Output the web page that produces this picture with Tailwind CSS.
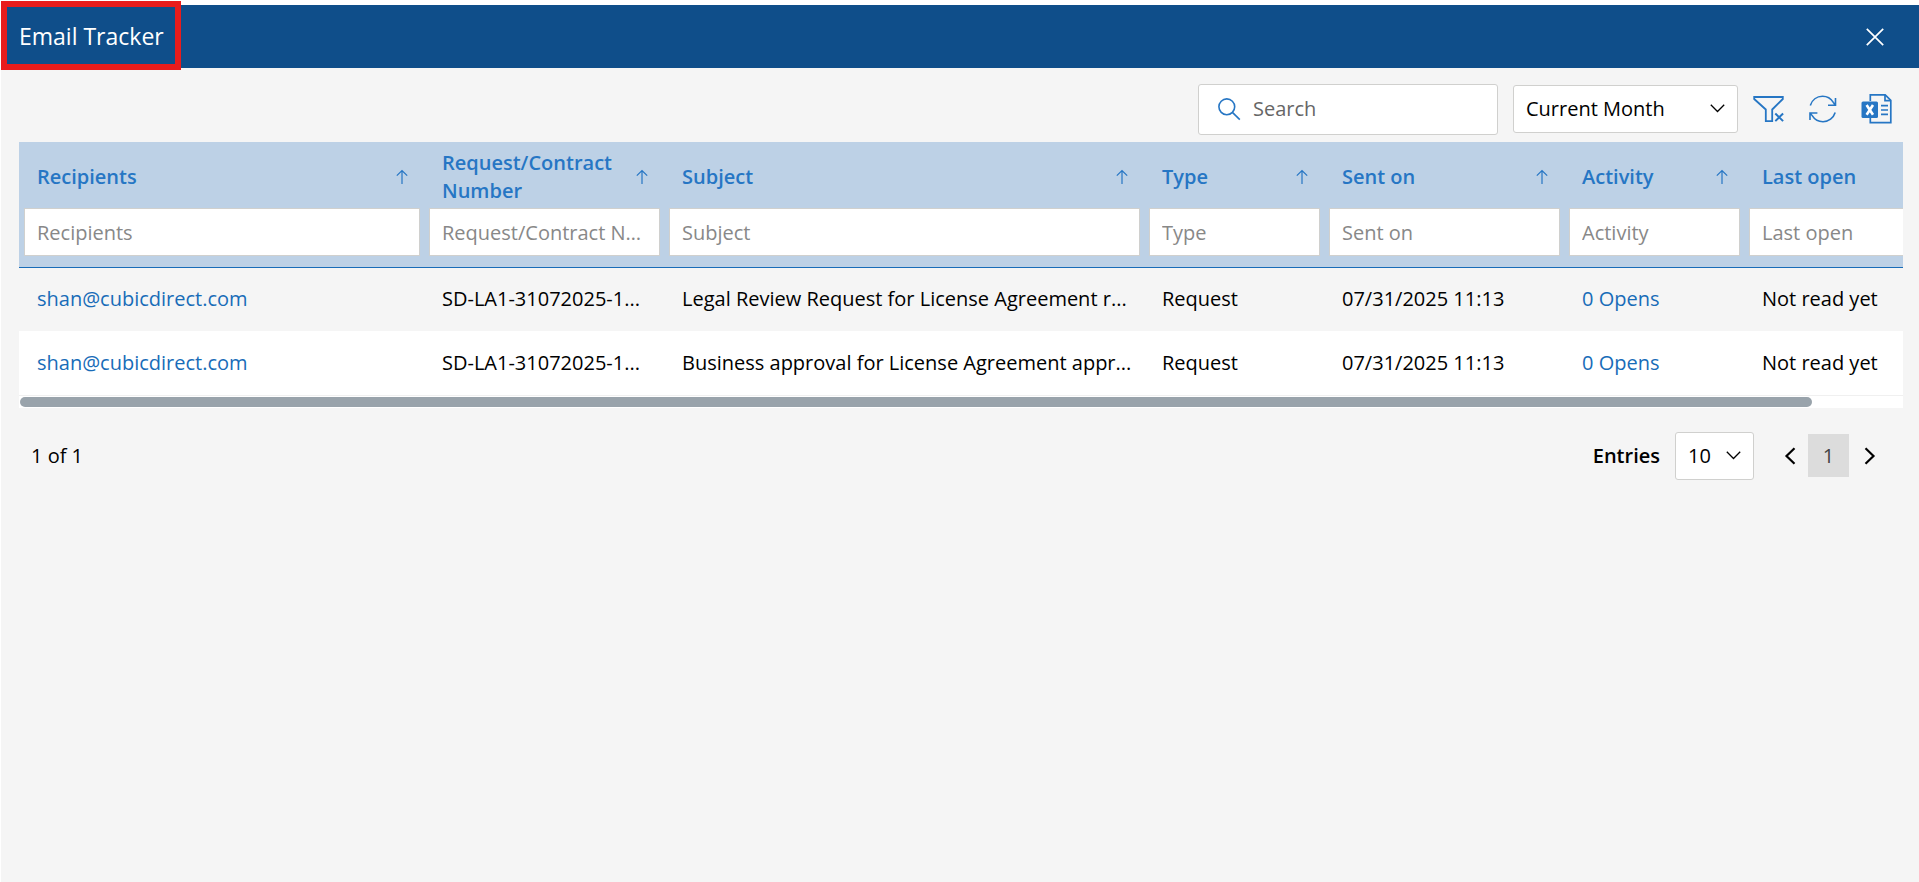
<!DOCTYPE html>
<html lang="en">
<head>
<meta charset="utf-8">
<meta name="viewport" content="width=device-width, initial-scale=1">
<title>Email Tracker</title>
<script src="https://cdn.jsdelivr.net/npm/@tailwindcss/browser@4"></script>
</head>
<body class="min-h-screen bg-white pt-[5px] pl-px font-['Segoe_UI','Open_Sans',sans-serif] text-[20px] leading-7 text-black flex flex-col">
<header class="relative flex h-[63px] shrink-0 items-center justify-between bg-[#0f4e8a] pl-[18px] pr-7 text-white">
  <h1 class="pb-px text-[23px] leading-8">Email Tracker</h1>
  <div class="absolute left-0 -top-1 h-[69px] w-[180px] border-6 border-[#e81c1c]" aria-hidden="true"></div>
  <button type="button" aria-label="Close" class="grid size-8 place-items-center">
    <svg class="size-[18px]" viewBox="0 0 18 18" fill="none" stroke="currentColor" stroke-width="1.7"><path d="M.8.8l16.4 16.4M17.2.8L.8 17.2"/></svg>
  </button>
</header>

<main class="flex-1 bg-[#f5f5f5] pl-[18px] pr-4">
  <div class="flex h-[74px] items-center justify-end pt-2 pr-[11px]">
    <label class="flex h-[51px] w-[300px] items-center gap-3 rounded-[3px] border border-[#d0d0ce] bg-white pl-[18px]">
      <svg class="size-6 shrink-0 text-[#2676c4]" viewBox="0 0 24 24" fill="none" stroke="currentColor" stroke-width="1.6"><circle cx="9.800" cy="9.800" r="7.900"/><path d="M15.400 15.400L22.800 22.600"/></svg>
      <input type="search" aria-label="Search" placeholder="Search" class="w-full min-w-0 bg-transparent outline-none placeholder:text-[#666]">
    </label>
    <div class="relative ml-[15px] w-[225px]">
      <select aria-label="Period" class="block h-12 w-full appearance-none rounded-[3px] border border-[#d0d0ce] bg-white pl-3 pr-10">
        <option>Current Month</option>
      </select>
      <svg class="pointer-events-none absolute right-[13px] top-[19px] h-[9px] w-[15px]" viewBox="0 0 15 9" fill="none" stroke="currentColor" stroke-width="1.3"><path d="M.8.8l6.700 6.700L14.200.8"/></svg>
    </div>
    <div class="ml-[15px] flex items-center gap-[23px] text-[#2676c4]">
      <button type="button" aria-label="Clear filters">
        <svg class="block h-[30px] w-8" viewBox="0 0 32 30" fill="none" stroke="currentColor" stroke-width="1.800"><path d="M1.200 3h28.600v2L19.200 15.500v11.600h-6.400V15.500L1.200 5z"/><path d="M22.300 19.500l7.800 7.600M30.100 19.500l-7.800 7.600" stroke-width="2"/></svg>
      </button>
      <button type="button" aria-label="Refresh">
        <svg class="block size-[30px]" viewBox="0 0 30 30" fill="none" stroke="currentColor" stroke-width="1.600"><path d="M2.300 11.500C4 6 8.800 2.300 14.500 2.300c4.600 0 8.600 2.500 10.800 6.100l1.700 2.300M27.500 4v7.200H20M27.200 18.500C25.500 24 20.600 27.700 15 27.700c-4.600 0-8.600-2.500-10.800-6.100l-2-2.300M2 26v-7h7.400"/></svg>
      </button>
      <button type="button" aria-label="Export to Excel">
        <svg class="block h-8 w-[31px]" viewBox="0 0 31 32" fill="none" stroke="currentColor" stroke-width="1.700"><path d="M9.300 8V1.900h14.900l5.600 5.500v22.300H9.300V24"/><path d="M24 2v5.600h5.600M20 12.600h7M20 17h7M20 21.400h7"/><rect x=".5" y="8.500" width="16.500" height="16.500" rx="1.500" fill="currentColor" stroke="none"/><path d="M5.600 12l6.400 9.800M12 12l-6.400 9.800" stroke="#fff" stroke-width="2.600"/></svg>
      </button>
    </div>
  </div>

  <div class="overflow-hidden">
    <table class="w-[1980px] table-fixed border-collapse text-left">
      <colgroup><col class="w-[405px]"><col class="w-[240px]"><col class="w-[480px]"><col class="w-[180px]"><col class="w-[240px]"><col class="w-[180px]"><col></colgroup>
      <thead id="head" class="bg-[#bdd1e6] text-[#2676c4]"></thead>
      <tbody>
        <tr class="h-16">
          <td class="px-[18px] whitespace-nowrap"><a href="#" class="text-[#186cb8]">shan@cubicdirect.com</a></td>
          <td class="pl-[18px] whitespace-nowrap">SD-LA1-31072025-1...</td>
          <td class="pl-[18px] whitespace-nowrap">Legal Review Request for License Agreement r...</td>
          <td class="pl-[18px] whitespace-nowrap">Request</td>
          <td class="pl-[18px] whitespace-nowrap">07/31/2025 11:13</td>
          <td class="pl-[18px] whitespace-nowrap"><a href="#" class="text-[#186cb8]">0 Opens</a></td>
          <td class="pl-[18px] whitespace-nowrap">Not read yet</td>
        </tr>
        <tr class="h-16 border-b border-[#f0f0f0] bg-white">
          <td class="px-[18px] whitespace-nowrap"><a href="#" class="text-[#186cb8]">shan@cubicdirect.com</a></td>
          <td class="pl-[18px] whitespace-nowrap">SD-LA1-31072025-1...</td>
          <td class="pl-[18px] whitespace-nowrap">Business approval for License Agreement appr...</td>
          <td class="pl-[18px] whitespace-nowrap">Request</td>
          <td class="pl-[18px] whitespace-nowrap">07/31/2025 11:13</td>
          <td class="pl-[18px] whitespace-nowrap"><a href="#" class="text-[#186cb8]">0 Opens</a></td>
          <td class="pl-[18px] whitespace-nowrap">Not read yet</td>
        </tr>
      </tbody>
    </table>
    <div class="h-3 bg-white p-px"><div class="h-full w-[95.2%] rounded-full bg-[#99a3ab]"></div></div>
  </div>

  <footer class="flex items-center pt-6 pl-3 pr-3">
    <span class="grow pt-px">1 of 1</span>
    <label for="entries" class="pt-px font-semibold">Entries</label>
    <div class="relative ml-[15px] w-[79px]">
      <select id="entries" class="block h-12 w-full appearance-none rounded-[3px] border border-[#d0d0ce] bg-white pl-3 pr-8"><option>10</option></select>
      <svg class="pointer-events-none absolute right-[13px] top-[19px] h-[9px] w-[15px]" viewBox="0 0 15 9" fill="none" stroke="currentColor" stroke-width="1.300"><path d="M.8.8l6.700 6.700L14.200.8"/></svg>
    </div>
    <nav aria-label="Pages" class="ml-[18px] flex items-center">
      <button type="button" aria-label="Previous page" class="grid h-11 w-[36px] place-items-center"><svg class="h-[18px] w-3" viewBox="0 0 12 18" fill="none" stroke="currentColor" stroke-width="2.200"><path d="M10.500 1.200L2.500 9l8 7.800"/></svg></button>
      <button type="button" aria-current="page" class="h-[43px] w-[41px] bg-[#dcdcdc] text-[#444]">1</button>
      <button type="button" aria-label="Next page" class="grid h-11 w-[42px] place-items-center"><svg class="h-[18px] w-3" viewBox="0 0 12 18" fill="none" stroke="currentColor" stroke-width="2.200"><path d="M1.500 1.200L9.500 9l-8 7.800"/></svg></button>
    </nav>
  </footer>
</main>
<script>
const columns = ['Recipients', 'Request/Contract Number', 'Subject', 'Type', 'Sent on', 'Activity', 'Last open'];
document.getElementById('head').innerHTML =
  '<tr class="h-[66px]">' + columns.map(c => `
    <th scope="col" class="pl-[18px] pr-4 pt-1 font-semibold">
      <div class="flex items-center justify-between gap-2">${c}
        <button type="button" aria-label="Sort by ${c}" class="shrink-0"><svg class="block h-4 w-3" viewBox="0 0 12 16" fill="none" stroke="currentColor" stroke-width="1.200"><path d="M6 15V1.500M.8 6.700L6 1.500l5.200 5.200"/></svg></button>
      </div></th>`).join('') + '</tr>' +
  '<tr class="h-[59px] border-b border-[#186cb8]">' + columns.map(c => `
    <td class="px-1 pb-[10px] pl-[5px]"><input type="text" aria-label="Filter ${c}" placeholder="${c}" class="block h-12 w-full border border-[#d0d0ce] bg-white px-3 pt-px text-black text-ellipsis outline-none placeholder:text-[#888]"></td>`).join('') + '</tr>';
</script>
</body>
</html>
